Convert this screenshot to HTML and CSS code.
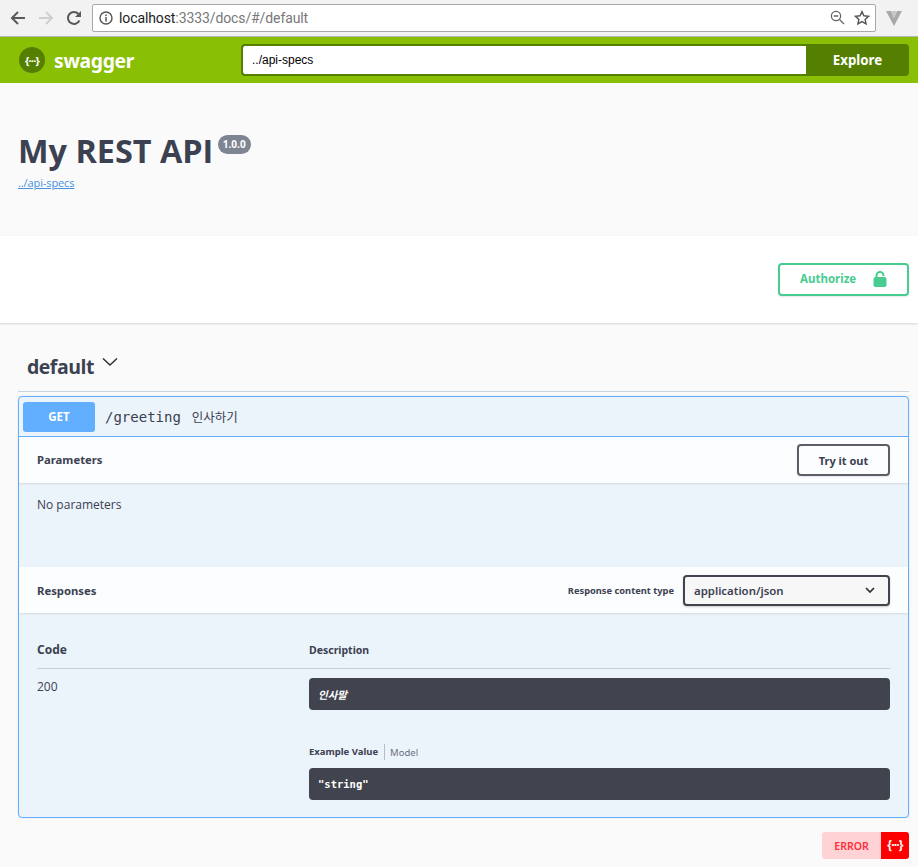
FILE: index.html

```html
<!DOCTYPE html>
<html lang="en">
<head>
    <meta charset="UTF-8">
    <title>Swagger UI</title>
    <link rel="stylesheet" href="styles.css">
</head>
<body>

    <!-- Browser chrome -->
    <div class="chrome">
        <svg class="nav-icon" width="16" height="16" viewBox="0 0 16 16"><path d="M15 8H2M8 2 2 8l6 6" fill="none" stroke="#5a5a5a" stroke-width="2"/></svg>
        <svg class="nav-icon" width="16" height="16" viewBox="0 0 16 16"><path d="M1 8h13M8 2l6 6-6 6" fill="none" stroke="#cfcfcf" stroke-width="2"/></svg>
        <svg class="nav-icon" width="16" height="16" viewBox="0 0 16 16"><path d="M13.4 10.500A6 6 0 1 1 12.500 4" fill="none" stroke="#5a5a5a" stroke-width="2"/><path d="M15 1v6H9z" fill="#5a5a5a"/></svg>
        <div class="address">
            <svg width="14" height="14" viewBox="0 0 14 14"><circle cx="7" cy="7" r="6" fill="none" stroke="#555" stroke-width="1.400"/><path d="M7 6v4.500M7 3.400v1.600" stroke="#555" stroke-width="1.500"/></svg>
            <span class="url"><b>localhost</b>:3333/docs/#/default</span>
            <svg class="zoom-icon" width="15" height="15" viewBox="0 0 15 15"><circle cx="6" cy="6" r="4.600" fill="none" stroke="#666" stroke-width="1.300"/><path d="M3.800 6h4.400M9.500 9.500l4.500 4.500" stroke="#666" stroke-width="1.300"/></svg>
            <svg width="16" height="16" viewBox="0 0 16 16"><path d="m8 1.600 1.900 4.200 4.600.5-3.400 3.100 1 4.500L8 11.600l-4.100 2.300 1-4.500L1.500 6.300l4.600-.5z" fill="none" stroke="#555" stroke-width="1.400"/></svg>
        </div>
        <svg class="ext-icon" width="18" height="16" viewBox="0 0 18 16"><path d="M1 1h5l3 7 3-7h5l-8 15z" fill="#a9a9a9"/><path d="M6 1h6L9 8z" fill="#c9c9c9"/></svg>
    </div>

    <!-- Swagger top bar -->
    <div class="topbar">
        <div class="logo">
            <span class="logo-mark">{···}</span>
            <span class="logo-text">swagger</span>
        </div>
        <div class="explore-form">
            <input class="explore-input" type="text" value="../api-specs">
            <button class="explore-btn">Explore</button>
        </div>
    </div>

    <section class="info">
        <h2 class="title">My REST API <span class="version">1.0.0</span></h2>
        <a class="spec-link" href="#">../api-specs</a>
    </section>

    <section class="scheme">
        <button class="authorize">
            <span>Authorize</span>
            <svg width="16" height="20" viewBox="0 0 16 20"><path d="M4.500 9V6.500a3.500 3.500 0 0 1 7 0V7" fill="none" stroke="#49cc90" stroke-width="2"/><rect x="1.500" y="8" width="13" height="10" rx="2" fill="#49cc90"/></svg>
        </button>
    </section>

    <main class="wrapper">
        <h4 class="tag">
            <span>default</span>
            <svg width="20" height="20" viewBox="0 0 20 20"><path d="M3 6.500 10 13l7-6.500" fill="none" stroke="#303030" stroke-width="1.500"/></svg>
        </h4>

        <div class="opblock">
            <div class="summary">
                <span class="method">GET</span>
                <span class="path">/greeting</span>
                <span class="summary-text">인사하기</span>
            </div>

            <div class="section-head params-head">
                <h4>Parameters</h4>
                <button class="try-out">Try it out</button>
            </div>
            <div class="params-body">No parameters</div>

            <div class="section-head responses-head">
                <h4>Responses</h4>
                <div class="content-type">
                    <label>Response content type</label>
                    <div class="select">
                        <span>application/json</span>
                        <svg width="10" height="7" viewBox="0 0 10 7"><path d="M1 1l4 4 4-4" fill="none" stroke="#303030" stroke-width="1.700"/></svg>
                    </div>
                </div>
            </div>

            <div class="responses-body">
                <div class="resp-grid resp-header">
                    <div class="col-code">Code</div>
                    <div class="col-desc">Description</div>
                </div>
                <div class="resp-grid">
                    <div class="code-val">200</div>
                    <div>
                        <div class="dark-box desc-box"><em>인사말</em></div>
                        <div class="tabs">
                            <span class="tab-on">Example Value</span>
                            <span class="tab-off">Model</span>
                        </div>
                        <div class="dark-box sample-box">"string"</div>
                    </div>
                </div>
            </div>
        </div>

        <div class="validator">
            <span class="error-label">ERROR</span>
            <span class="error-mark">{···}</span>
        </div>
    </main>

</body>
</html>
```

FILE: styles.css

```css
html, body {
    margin: 0;
    padding: 0;
    height: 867px;
    overflow: hidden;
    background-color: #fafafa;
    color: #3b4151;
    font-family: "Open Sans", sans-serif;
}

h2, h4 {
    margin: 0;
}

/* --- Browser chrome --- */
.chrome {
    height: 35px;
    background-color: #f2f2f2;
    border-bottom: 1px solid #b5b5b5;
    display: flex;
    align-items: center;
    padding: 0 10px 1px;
}

.nav-icon {
    margin-right: 12px;
    flex-shrink: 0;
}

.address {
    width: 784px;
    height: 28px;
    margin-left: -2px;
    background-color: white;
    border: 1px solid #a9a9a9;
    border-radius: 2px;
    display: flex;
    align-items: center;
    padding: 0 5px 0 6px;
    box-sizing: border-box;
    flex-shrink: 0;
}

.url {
    flex-grow: 1;
    margin-left: 6px;
    font-family: "Roboto", sans-serif;
    font-size: 14px;
    color: #777;
    letter-spacing: -0.1px;
}

.url b {
    font-weight: 400;
    color: #222;
}

.zoom-icon {
    margin-right: 9px;
}

.ext-icon {
    margin-left: 9px;
    flex-shrink: 0;
}

/* --- Top bar --- */
.topbar {
    height: 46px;
    background-color: #89bf04;
    display: flex;
    align-items: center;
    padding: 0 9px 0 19px;
}

.logo {
    width: 223px;
    margin-right: -1px;
    display: flex;
    align-items: center;
    flex-shrink: 0;
}

.logo-mark {
    width: 26px;
    height: 26px;
    border-radius: 50%;
    background-color: #547f00;
    color: white;
    font-family: "Noto Sans", sans-serif;
    font-size: 11px;
    font-weight: 700;
    letter-spacing: -0.8px;
    display: flex;
    align-items: center;
    justify-content: center;
}

.logo-text {
    margin-left: 9px;
    color: white;
    font-family: "Noto Sans", sans-serif;
    font-size: 19.300px;
    font-weight: 700;
    letter-spacing: -0.3px;
}

.explore-form {
    flex-grow: 1;
    display: flex;
    height: 32px;
}

.explore-input {
    flex-grow: 1;
    min-width: 0;
    border: 2px solid #547f00;
    border-right: none;
    border-radius: 4px 0 0 4px;
    padding: 0 9px;
    font-family: "Liberation Sans", sans-serif;
    font-size: 12px;
    color: black;
    background-color: white;
    outline: none;
}

.explore-btn {
    width: 103px;
    border: none;
    border-radius: 0 4px 4px 0;
    background-color: #547f00;
    color: white;
    font-family: "Noto Sans", sans-serif;
    font-size: 13.300px;
    font-weight: 700;
    padding: 0;
}

/* --- Info --- */
.info {
    height: 153px;
    padding: 47px 18px 0;
    box-sizing: border-box;
}

.title {
    font-size: 32.400px;
    font-weight: 700;
    line-height: 40px;
    color: #3b4151;
}

.version {
    display: inline-block;
    vertical-align: top;
    margin: 5px 0 0 -4px;
    padding: 0 5px;
    height: 19px;
    line-height: 18px;
    border-radius: 10px;
    background-color: #7d8492;
    color: white;
    font-size: 10px;
    font-weight: 700;
}

.spec-link {
    display: block;
    margin-top: 5px;
    font-size: 11px;
    color: #4990e2;
    letter-spacing: -0.1px;
}

/* --- Scheme bar --- */
.scheme {
    height: 87px;
    background-color: white;
    box-shadow: 0 1px 2px 0 rgba(0, 0, 0, 0.15);
    display: flex;
    justify-content: flex-end;
    align-items: flex-start;
    padding: 27px 9px 0 0;
    box-sizing: border-box;
}

.authorize {
    width: 131px;
    height: 33px;
    border: 2px solid #49cc90;
    border-radius: 4px;
    background-color: white;
    color: #49cc90;
    font-family: "Noto Sans", sans-serif;
    font-size: 11.500px;
    font-weight: 700;
    display: flex;
    align-items: center;
    padding: 0 0 2px 20px;
    box-sizing: border-box;
    box-shadow: 0 1px 2px rgba(0, 0, 0, 0.1);
}

.authorize svg {
    margin-left: 16px;
}

/* --- Operations --- */
.wrapper {
    padding: 0 9px 0 18px;
}

.tag {
    height: 69px;
    box-sizing: border-box;
    padding: 28px 0 0 9px;
    border-bottom: 1px solid #c9d4dc;
    display: flex;
    align-items: flex-start;
    font-size: 19.500px;
    line-height: 32px;
    font-weight: 700;
    letter-spacing: -0.5px;
    color: #3b4151;
}

.tag svg {
    margin: 1px 0 0 6px;
}

.opblock {
    margin-top: 4px;
    height: 422px;
    border: 1px solid #61affe;
    border-radius: 4px;
    background-color: #ebf3fb;
    box-sizing: border-box;
    box-shadow: 0 0 2px rgba(0, 0, 0, 0.12);
}

.summary {
    height: 40px;
    border-bottom: 1px solid #61affe;
    display: flex;
    align-items: center;
    padding: 0 4px;
    box-sizing: border-box;
}

.method {
    width: 72px;
    height: 30px;
    line-height: 30px;
    border-radius: 3px;
    background-color: #61affe;
    color: white;
    text-align: center;
    font-family: "Noto Sans", sans-serif;
    font-size: 11.500px;
    font-weight: 700;
}

.path {
    margin-left: 10px;
    font-family: "DejaVu Sans Mono", monospace;
    font-size: 14px;
    color: #3b4151;
}

.summary-text {
    margin-left: 11px;
    font-family: "Noto Sans CJK KR", sans-serif;
    font-size: 12.500px;
    color: #3b4151;
}

.section-head {
    background-color: rgba(255, 255, 255, 0.8);
    box-shadow: 0 1px 2px rgba(0, 0, 0, 0.1);
    display: flex;
    justify-content: space-between;
    align-items: center;
    padding: 0 18px;
    box-sizing: border-box;
}

.params-head {
    height: 46px;
}

.params-head h4 {
    margin-bottom: 2px;
}

.section-head h4 {
    font-family: "Noto Sans", sans-serif;
    font-size: 11.300px;
    font-weight: 700;
    color: #3b4151;
}

.try-out {
    width: 93px;
    height: 32px;
    border: 2px solid #5a5e66;
    border-radius: 4px;
    background-color: transparent;
    color: #3b4151;
    font-family: "Noto Sans", sans-serif;
    font-size: 11px;
    font-weight: 700;
    padding: 0;
    box-shadow: 0 1px 2px rgba(0, 0, 0, 0.1);
}

.params-body {
    height: 84px;
    padding: 13px 18px 0;
    box-sizing: border-box;
    font-size: 12px;
    line-height: 17px;
}

.responses-head {
    height: 46px;
}

.content-type {
    display: flex;
    align-items: center;
}

.content-type label {
    font-family: "Noto Sans", sans-serif;
    font-size: 9.300px;
    font-weight: 700;
    margin-right: 9px;
}

.select {
    width: 207px;
    height: 31px;
    border: 2px solid #41444e;
    border-radius: 4px;
    background-color: #f7f7f7;
    display: flex;
    justify-content: space-between;
    align-items: center;
    padding: 0 13px 0 9px;
    box-sizing: border-box;
    font-family: "Noto Sans", sans-serif;
    font-size: 11.400px;
    font-weight: 600;
    box-shadow: 0 1px 2px rgba(0, 0, 0, 0.2);
}

.responses-body {
    padding: 0 18px;
}

.resp-grid {
    display: grid;
    grid-template-columns: 272px 1fr;
}

.resp-header {
    height: 56px;
    align-items: end;
    padding-bottom: 10px;
    box-sizing: border-box;
    border-bottom: 1px solid #c9ced6;
}

.col-code {
    font-family: "Noto Sans", sans-serif;
    font-size: 12px;
    font-weight: 700;
    line-height: 17px;
}

.col-desc {
    margin-bottom: -1px;
    font-family: "Noto Sans", sans-serif;
    font-size: 10.500px;
    font-weight: 700;
    line-height: 17px;
}

.code-val {
    padding-top: 9px;
    font-size: 12px;
    line-height: 17px;
}

.dark-box {
    height: 32px;
    border-radius: 4px;
    background-color: #41444e;
    color: white;
    display: flex;
    align-items: center;
    padding: 0 9px;
    box-sizing: border-box;
}

.desc-box {
    margin-top: 9px;
    font-family: "Noto Sans CJK KR", sans-serif;
    font-size: 10.500px;
    font-weight: 700;
}

.tabs {
    margin-top: 34px;
    height: 16px;
    display: flex;
    align-items: center;
    font-size: 9.500px;
    font-family: "Noto Sans", sans-serif;
}

.tab-on {
    font-weight: 700;
    padding-right: 6px;
    border-right: 1px solid #b8bcc4;
    line-height: 16px;
}

.tab-off {
    padding-left: 5px;
    color: #6b7080;
}

.sample-box {
    margin-top: 8px;
    font-family: "DejaVu Sans Mono", monospace;
    font-size: 10.500px;
    font-weight: 700;
}

/* --- Validator badge --- */
.validator {
    margin-top: 14px;
    display: flex;
    justify-content: flex-end;
    height: 27px;
}

.error-label {
    width: 59px;
    background-color: #ffd3d6;
    border-radius: 3px 0 0 3px;
    color: #ff2d3a;
    font-family: "Noto Sans", sans-serif;
    font-size: 10.500px;
    font-weight: 600;
    line-height: 28px;
    text-align: center;
}

.error-mark {
    width: 28px;
    background-color: #f00;
    border-radius: 0 3px 3px 0;
    color: white;
    font-family: "Noto Sans", sans-serif;
    font-size: 12px;
    font-weight: 700;
    letter-spacing: -0.8px;
    line-height: 25px;
    text-align: center;
}
```
